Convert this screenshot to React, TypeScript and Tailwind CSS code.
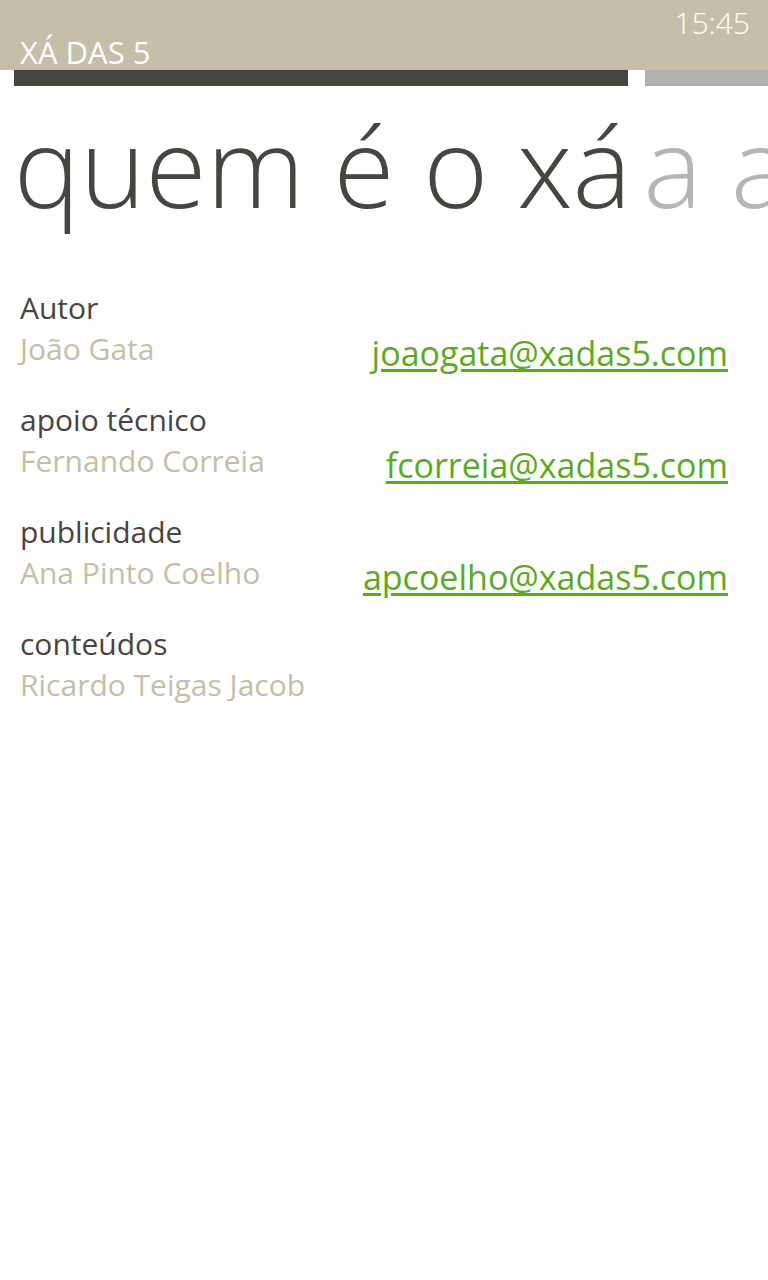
const contacts = [
  { role: "Autor", name: "João Gata", email: "joaogata@xadas5.com" },
  { role: "apoio técnico", name: "Fernando Correia", email: "fcorreia@xadas5.com" },
  { role: "publicidade", name: "Ana Pinto Coelho", email: "apcoelho@xadas5.com" },
  { role: "conteúdos", name: "Ricardo Teigas Jacob", email: "" },
];

export default function App() {
  return (
    <div
      className="w-[768px] h-[1280px] bg-white overflow-hidden"
      style={{ fontFamily: "'Open Sans', 'Noto Sans', sans-serif" }}
    >
      {/* title bar */}
      <div className="h-[70px] bg-[#c5bea8] flex justify-between pl-5 pr-[18px]">
        <span className="self-end mb-[2px] text-[31px] leading-none text-white">XÁ DAS 5</span>
        <span className="mt-[8px] text-[30px] leading-none font-light text-white">15:45</span>
      </div>

      {/* pivot tab bar */}
      <div className="flex h-4">
        <div className="ml-[14px] w-[614px] bg-[#48443f]" />
        <div className="ml-[17px] flex-1 bg-[#b4b0ae]" />
      </div>

      {/* pivot headers */}
      <div className="flex whitespace-nowrap pl-[14px] mt-[14px] text-[111px] leading-[130px] font-light">
        <span className="text-[#48443f]">quem é o xá</span>
        <span className="ml-[12px] text-[#b8b4b2]">a a</span>
      </div>

      {/* contacts */}
      <div className="mt-[58px] pl-5 pr-10 flex flex-col gap-[21px]">
        {contacts.map((c) => (
          <div key={c.role}>
            <div className="text-[30px] leading-[40px] text-[#48443f]">{c.role}</div>
            <div className="flex justify-between items-start">
              <span className="text-[30px] leading-[42px] text-[#c5bea8]">{c.name}</span>
              {c.email && (
                <a
                  href={`mailto:${c.email}`}
                  className="text-[34px] leading-[51px] text-[#5aab1e] underline underline-offset-[3px]"
                >
                  {c.email}
                </a>
              )}
            </div>
          </div>
        ))}
      </div>
    </div>
  );
}
